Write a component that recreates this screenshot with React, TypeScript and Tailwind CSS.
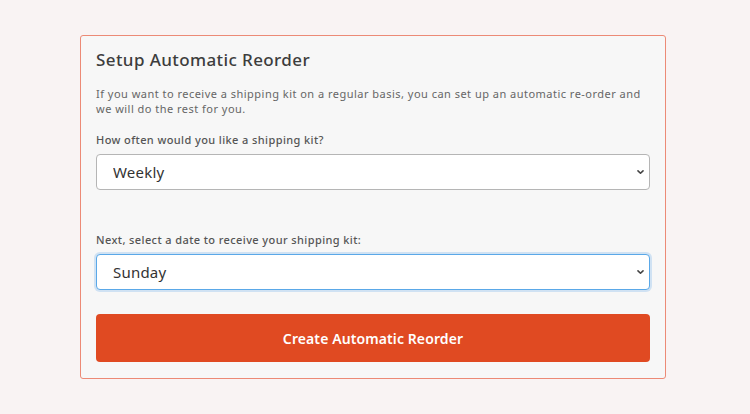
import React from "react";

function Chevron() {
  return (
    <svg width="9" height="9" viewBox="0 0 10 10" className="absolute right-[5px] top-1/2 -translate-y-1/2 pointer-events-none">
      <path d="M2.2 3.8 L5 6.4 L7.8 3.8" fill="none" stroke="#444" strokeWidth="1.8" strokeLinecap="round" strokeLinejoin="round" />
    </svg>
  );
}

export default function App() {
  const font = { fontFamily: '"Noto Sans", "Open Sans", sans-serif' };
  return (
    <div className="w-[750px] h-[414px] bg-[#f9f3f3] pt-[35px] pl-[80px]" style={font}>
      <div className="w-[586px] h-[344px] bg-[#f7f7f7] border border-[#ec8a76] rounded-[3px] px-[15px] pt-[12px]">
        <h1 className="text-[17px] leading-[24px] font-medium text-[#3d3d3d] tracking-[0.4px]">Setup Automatic Reorder</h1>
        <p className="mt-[14px] text-[11px] leading-[15px] text-[#666] tracking-[0.48px]">
          If you want to receive a shipping kit on a regular basis, you can set up an automatic re-order and we will do the rest for you.
        </p>
        <div className="mt-[16px] text-[11px] leading-[15px] text-[#555] font-medium tracking-[0.4px]">How often would you like a shipping kit?</div>
        <div className="relative mt-[7px] w-[554px]">
          <select defaultValue="Weekly" className="appearance-none w-full h-[36px] bg-white border border-[#b5b5b5] rounded-[4px] pl-[16px] text-[15px] text-[#333] tracking-[0.2px] outline-none" style={font}>
            <option>Weekly</option>
            <option>Monthly</option>
          </select>
          <Chevron />
        </div>
        <div className="mt-[42px] text-[11px] leading-[15px] text-[#555] font-medium tracking-[0.4px]">Next, select a date to receive your shipping kit:</div>
        <div className="relative mt-[7px] w-[554px]">
          <select defaultValue="Sunday" className="appearance-none w-full h-[36px] bg-white border border-[#5aa8e8] rounded-[4px] pl-[16px] text-[15px] text-[#333] tracking-[0.2px] outline-none shadow-[0_0_0_2px_rgba(120,180,235,0.3)]" style={font}>
            <option>Sunday</option>
            <option>Monday</option>
          </select>
          <Chevron />
        </div>
        <button className="mt-[24px] w-[554px] h-[48px] bg-[#e04a22] rounded-[4px] text-white text-[14px] font-semibold tracking-[0.1px]" style={font}>
          Create Automatic Reorder
        </button>
      </div>
    </div>
  );
}
